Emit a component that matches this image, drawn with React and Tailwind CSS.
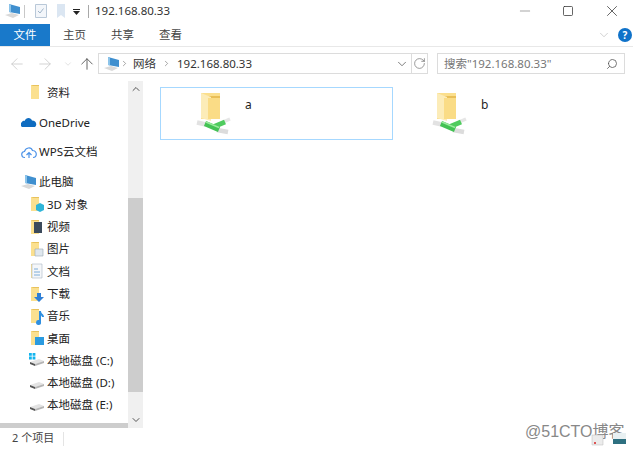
import React from 'react';
import { ArrowLeft, ArrowRight, ArrowUp, ChevronDown, ChevronRight, ChevronUp, RotateCw, Search, X, Minus, Square } from 'lucide-react';

const rowIndent = {
  0: 'pl-[21px] gap-[2px]',
  1: 'pl-[30px] gap-[1px]',
  2: 'pl-[29px] gap-[2px]',
};

const FolderBase = ({ children, back = '#e8c25d', front = '#fbe08f' }) => (
  <svg width="16" height="16" viewBox="0 0 16 16" className="shrink-0 overflow-visible">
    <path d="M1 1h8v14H1z" fill={back} />
    <path d="M1 1l4 2v12H1z" fill={front} />
    <path d="M3 2h6v13H3z" fill={front} />
    {children}
  </svg>
);

const PcIcon = ({ size = 16 }) => (
  <svg width={size} height={size} viewBox="0 0 16 16" className="shrink-0">
    <path d="M4 1l11 3v7L4 9z" fill="#3f8fcf" />
    <path d="M4 1l2 .5v7.900L4 9z" fill="#8cc4ea" />
    <path d="M0 12l7-2 7 2-6 3z" fill="#d9d9d9" />
  </svg>
);

const DriveIcon = ({ win }) => (
  <svg width="16" height="16" viewBox="0 0 16 16" className="shrink-0 overflow-visible">
    <path d="M1 10l9-3 5 2-9 3z" fill="#e3e3e3" />
    <path d="M1 10l5 2v2l-5-2z" fill="#555" />
    <path d="M6 12l9-3v2l-9 3z" fill="#b5b5b5" />
    {win && <path d="M0 1h2.800v2.800H0zM3.600 1h2.800v2.800H3.600zM0 4.600h2.800v2.800H0zM3.600 4.600h2.800v2.800H3.600z" fill="#12b4ee" />}
  </svg>
);

const NetFolder = () => (
  <svg width="36" height="44" viewBox="0 0 36 44" className="shrink-0">
    <path d="M5 0h19v25H5z" fill="#e9bf58" />
    <path d="M5 0h19v3H12v23H5z" fill="#fbdf8d" />
    <path d="M5 0l10 4v24l-10-3z" fill="#fcecb8" />
    <path d="M12 5h12v21H12z" fill="#fadc86" />
    <path d="M1 29.500l9 2" stroke="#e2e2e2" strokeWidth="4.500" fill="none" />
    <path d="M27 29l7-3" stroke="#e6e6e6" strokeWidth="3.500" fill="none" />
    <path d="M21 37l11 2" stroke="#dcdcdc" strokeWidth="4.500" fill="none" />
    <path d="M17 34l12-5" stroke="#4fcb5e" strokeWidth="5" fill="none" />
    <path d="M9 30.500l14 6" stroke="#43c254" strokeWidth="5.500" fill="none" />
    <path d="M10 29l13 5.500" stroke="#9aeb9c" strokeWidth="1.500" fill="none" />
  </svg>
);

const Row = ({ icon, label, level = 1, className = '' }) => (
  <div className={`flex h-[22.3px] items-center ${rowIndent[level]} ${className}`}>
    {icon}
    <span className="whitespace-nowrap">{label}</span>
  </div>
);

const sidebarRows = [
  { label: '3D 对象', overlay: <path d="M6 9l4-2 4 2v5l-4 2-4-2z" fill="#2fb5d8" /> },
  { label: '视频', overlay: <path d="M4 3h8v11H4z" fill="#3b4a5c" /> },
  { label: '图片', overlay: <path d="M5 8h8v7H5z" fill="#dfe7ee" stroke="#9aa7b2" strokeWidth=".6" /> },
  {
    label: '文档',
    overlay: (
      <g>
        <path d="M2 1h10v14H2z" fill="#f5f7f9" stroke="#a9b6c2" strokeWidth=".6" />
        <path d="M4 6h4M4 9h6M4 12h6" stroke="#5d9bd0" strokeWidth=".8" />
      </g>
    ),
  },
  { label: '下载', overlay: <path d="M7 7h4v4h3l-5 5-5-5h3z" fill="#2f7fd6" /> },
  { label: '音乐', overlay: <path d="M9 3h2c0 3 3 3 3 6l-2 0c0-1-1-1-1-2v7a2.500 2.500 0 1 1-2-2z" fill="#2f8fe0" /> },
  { label: '桌面', overlay: <path d="M5 7h9v8H5z" fill="#2b9be0" /> },
];

export default function App() {
  return (
    <div className="relative flex h-[449px] w-[633px] flex-col overflow-hidden bg-white text-[11.5px] text-[#1f1f1f] [font-family:'Noto_Sans','Noto_Sans_CJK_SC',sans-serif]">
      {/* title bar */}
      <div className="flex h-[24px] shrink-0 items-center pb-[2px] pl-[5px]">
        <PcIcon />
        <div className="ml-[3px] h-[13px] w-px bg-[#c8c8c8]" />
        <svg width="12" height="14" viewBox="0 0 12 14" className="ml-[10px]">
          <path d="M.5 .5h11v13H.5z" fill="#f3f6fa" stroke="#b9c8d8" />
          <path d="M3 7l2 2 3.500-4.500" fill="none" stroke="#9fb4c8" />
        </svg>
        <svg width="8" height="14" viewBox="0 0 8 14" className="ml-[10px]">
          <path d="M0 0h8v14L4 11l-4 3z" fill="#dbe6f2" />
        </svg>
        <svg width="7" height="6" viewBox="0 0 7 6" className="ml-[8px] mt-[1px]">
          <path d="M0 0h7v1H0zM0 2h7L3.500 6z" fill="#222" />
        </svg>
        <div className="ml-[8px] h-[13px] w-px bg-[#a8a8a8]" />
        <span className="ml-[6px] text-[#333]">192.168.80.33</span>
        <div className="ml-auto flex items-center pr-[12px]">
          <Minus size={16} strokeWidth={1.1} className="mr-[29px] text-[#888]" />
          <Square size={12} strokeWidth={1.5} className="mr-[29px] text-[#333]" />
          <X size={18} strokeWidth={1} className="text-[#333]" />
        </div>
      </div>

      {/* ribbon tabs */}
      <div className="flex h-[23px] shrink-0 items-center border-b border-[#e8e8e8] text-[#444]">
        <div className="flex h-full w-[50px] items-center justify-center bg-[#1979ca] text-white">文件</div>
        <span className="ml-[13px]">主页</span>
        <span className="ml-[25px]">共享</span>
        <span className="ml-[25px]">查看</span>
        <div className="ml-auto flex items-center gap-[7px] pr-[1px]">
          <ChevronDown size={14} strokeWidth={1} className="text-[#b0b0b0]" />
          <div className="flex h-[14px] w-[14px] items-center justify-center rounded-full bg-[#0f72c9] text-[10px] font-bold text-white">?</div>
        </div>
      </div>

      {/* address bar */}
      <div className="flex h-[33px] shrink-0 items-center pl-[8px]">
        <ArrowLeft size={18} strokeWidth={1} className="text-[#c4c4c4]" />
        <ArrowRight size={18} strokeWidth={1} className="ml-[10px] text-[#c4c4c4]" />
        <ChevronDown size={10} strokeWidth={1.2} className="ml-[9px] text-[#c4c4c4]" />
        <ArrowUp size={18} strokeWidth={1.2} className="ml-[5px] text-[#555]" />
        <div className="ml-[2px] flex h-[21px] w-[330px] items-center border border-[#dcdcdc] pl-[5px] text-[#333]">
          <PcIcon />
          <ChevronRight size={9} strokeWidth={1.5} className="text-[#666]" />
          <span className="ml-[4px]">网络</span>
          <ChevronRight size={9} strokeWidth={1.5} className="ml-[6px] text-[#666]" />
          <span className="ml-[6px]">192.168.80.33</span>
          <ChevronDown size={14} strokeWidth={1.3} className="ml-auto text-[#555]" />
          <div className="ml-[2px] flex h-full w-[16px] items-center justify-center border-l border-[#dcdcdc]">
            <RotateCw size={13} strokeWidth={1.2} className="text-[#666]" />
          </div>
        </div>
        <div className="ml-[9px] flex h-[21px] w-[188px] items-center border border-[#dcdcdc] pl-[6px] pr-[6px] text-[#777]">
          <span>搜索"192.168.80.33"</span>
          <Search size={12} strokeWidth={1.6} className="ml-auto -scale-x-100 text-[#555]" />
        </div>
      </div>

      {/* body */}
      <div className="flex min-h-0 flex-1">
        <div className="flex w-[128px] shrink-0 flex-col">
          <div className="flex-1 pt-[1px] text-[#222]">
            <Row icon={<FolderBase />} label="资料" />
            <Row
              level={0}
              className="mt-[7.7px]"
              icon={
                <svg width="16" height="12" viewBox="0 0 16 12" className="shrink-0">
                  <path d="M1 11a3 3 0 0 1 0-5c.5-1 1.500-1.500 2.500-1C5 1 10 1 11 4.500 14 4.500 16 7 15 9.500c-.3 1-1 1.500-2 1.500z" fill="#0f6cc0" />
                </svg>
              }
              label="OneDrive"
            />
            <Row
              level={0}
              className="mt-[7.7px]"
              icon={
                <svg width="16" height="13" viewBox="0 0 16 13" className="shrink-0">
                  <path d="M4 11.500a3 3 0 0 1-.5-6C4.500 1.500 10 .5 11.500 4.500a3.500 3.500 0 0 1 .5 7M5.500 9L8 6.500 10.500 9M8 7v5" fill="none" stroke="#4d93e8" strokeWidth="1.2" />
                </svg>
              }
              label="WPS云文档"
            />
            <Row level={0} className="mt-[7.7px]" icon={<PcIcon />} label="此电脑" />
            {sidebarRows.map((r) => (
              <Row key={r.label} icon={<FolderBase>{r.overlay}</FolderBase>} label={r.label} />
            ))}
            <Row level={2} icon={<DriveIcon win />} label="本地磁盘 (C:)" />
            <Row level={2} icon={<DriveIcon />} label="本地磁盘 (D:)" />
            <Row level={2} icon={<DriveIcon />} label="本地磁盘 (E:)" />
          </div>
          <div className="h-[5px] shrink-0 bg-[#cdcdcd]" />
        </div>

        {/* vertical scrollbar */}
        <div className="mt-[1px] flex w-[15px] shrink-0 flex-col bg-[#f0f0f0]">
          <div className="flex h-[15px] items-center justify-center">
            <ChevronUp size={12} strokeWidth={2} className="text-[#555]" />
          </div>
          <div className="mt-[102px] h-[194px] bg-[#cdcdcd]" />
          <div className="mt-auto flex h-[17px] items-center justify-center">
            <ChevronDown size={12} strokeWidth={2} className="text-[#555]" />
          </div>
        </div>

        {/* file area */}
        <div className="grid flex-1 grid-cols-[233px_233px] content-start pl-[17px] pt-[7px]">
          <div className="flex h-[53px] border border-[#a6d8ff] pl-[35px] pt-[5px]">
            <NetFolder />
            <span className="ml-[13px] mt-[3px] text-[12px]">a</span>
          </div>
          <div className="flex h-[53px] pl-[39px] pt-[6px]">
            <NetFolder />
            <span className="ml-[13px] mt-[3px] text-[12px]">b</span>
          </div>
        </div>
      </div>

      {/* status bar */}
      <div className="flex h-[21px] shrink-0 items-center pl-[12px] text-[11px] text-[#444]">
        <span>2 个项目</span>
        <div className="ml-[9px] h-[14px] w-px bg-[#e4e4e4]" />
      </div>

      {/* watermark */}
      <div className="absolute left-[525px] top-[423px] whitespace-nowrap text-[16px] leading-[18px] text-[#888] [font-family:'Liberation_Sans','Noto_Sans_CJK_SC',sans-serif]">@51CTO博客</div>
      <svg width="36" height="14" viewBox="0 0 36 14" className="absolute left-[591px] top-[432px]">
        <path d="M1 3h11v10H1z" fill="#ececec" stroke="#bbb" strokeWidth=".5" />
        <path d="M3 10h2v2H3z" fill="#d55" />
        <path d="M22 1h13v11H22z" fill="#e8f0f2" />
        <path d="M22 7h13v5H22z" fill="#2e7080" />
      </svg>
    </div>
  );
}
